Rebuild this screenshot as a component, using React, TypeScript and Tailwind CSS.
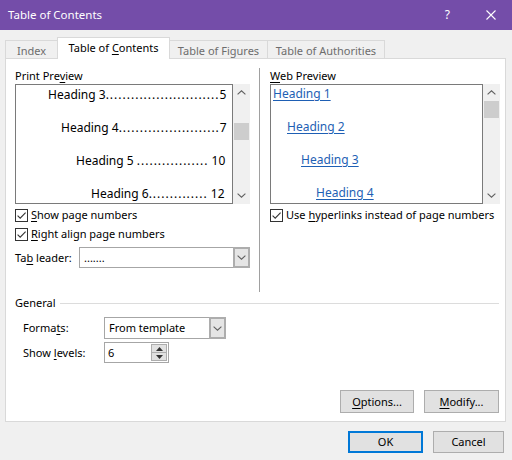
import type { ReactNode } from 'react';

function U({ children }: { children: ReactNode }) {
  return <span className="underline decoration-1 underline-offset-[2px]">{children}</span>;
}

function CheckBox() {
  return (
    <span className="flex h-[13px] w-[13px] shrink-0 items-center justify-center border border-[#333333] bg-white">
      <svg width="11" height="11" viewBox="0 0 11 11">
        <path d="M1.6 5.6 4.2 8.2 9.6 2.6" fill="none" stroke="#333333" strokeWidth="1.1" />
      </svg>
    </span>
  );
}

function Chevron({ up = false }: { up?: boolean }) {
  return (
    <svg width="9" height="5" viewBox="0 0 9 5">
      <path
        d={up ? 'M0.6 4.4 4.5 0.8 8.4 4.4' : 'M0.6 0.6 4.5 4.2 8.4 0.6'}
        fill="none"
        stroke="#606060"
        strokeWidth="1.1"
      />
    </svg>
  );
}

function ScrollBar({ thumbTop }: { thumbTop: number }) {
  return (
    <div className="flex w-[17px] shrink-0 flex-col bg-[#f0f0f0]">
      <div className="flex h-[17px] items-center justify-center">
        <Chevron up />
      </div>
      <div className="relative flex-1">
        <div className="absolute left-[1px] right-[1px] h-[17px] bg-[#cdcdcd]" style={{ top: thumbTop }} />
      </div>
      <div className="flex h-[17px] items-center justify-center">
        <Chevron />
      </div>
    </div>
  );
}

function Combo({ value, width, height }: { value: string; width: string; height: string }) {
  return (
    <div className={`flex ${width} ${height} bg-white`}>
      <div className="flex flex-1 items-center border border-r-0 border-[#a6a6a6] pl-[4px] text-black">
        <span>{value}</span>
      </div>
      <div className="flex w-[17px] items-center justify-center border-2 border-[#adadad] bg-[#e5e5e5]">
        <Chevron />
      </div>
    </div>
  );
}

// dot leaders sized so each row fits the preview box
const printRows = [
  { pad: 'pl-[32px]', label: 'Heading 3', dots: 27, num: '5' },
  { pad: 'pl-[45px]', label: 'Heading 4', dots: 24, num: '7' },
  { pad: 'pl-[60px]', label: 'Heading 5 ', dots: 17, num: ' 10' },
  { pad: 'pl-[75px]', label: 'Heading 6', dots: 14, num: ' 12' },
];

const webRows = [
  { pad: 'pl-[2px]', label: 'Heading 1' },
  { pad: 'pl-[16px]', label: 'Heading 2' },
  { pad: 'pl-[30px]', label: 'Heading 3' },
  { pad: 'pl-[45px]', label: 'Heading 4' },
];

function Button({ children, width, primary = false }: { children: ReactNode; width: string; primary?: boolean }) {
  return (
    <button
      type="button"
      className={`flex h-[22px] ${width} items-center justify-center bg-[#e1e1e1] text-black ${
        primary ? 'border-2 border-[#0078d7]' : 'border border-[#adadad]'
      }`}
    >
      {children}
    </button>
  );
}

export default function App() {
  return (
    <div className="flex h-[460px] w-[512px] flex-col overflow-hidden bg-[#f0f0f0] font-['Noto_Sans','Liberation_Sans',sans-serif] text-[11px] leading-[16px] text-black">
      {/* title bar */}
      <div className="flex h-[30px] shrink-0 items-center bg-[#744da9] pl-[8px] text-[11.5px] text-white">
        <span className="flex-1">Table of Contents</span>
        <span className="mr-[36px] text-[12px]">?</span>
        <svg width="10" height="10" viewBox="0 0 10 10" className="mr-[16px]">
          <path d="M0.5 0.5 9.5 9.5M9.5 0.5 0.5 9.5" stroke="#ffffff" strokeWidth="1.1" />
        </svg>
      </div>

      {/* tabs */}
      <div className="mt-[7px] flex h-[21px] items-end pl-[5px]">
        <div className="flex h-[18px] w-[52px] items-center justify-center border-l border-t border-[#d9d9d9] pt-[2px] text-[#6d6d6d]">
          <span>Index</span>
        </div>
        <div className="relative z-10 -mb-px flex h-[22px] w-[113px] items-center justify-center border-x border-t border-[#d9d9d9] bg-white pb-[1px]">
          <span>
            Table of <U>C</U>ontents
          </span>
        </div>
        <div className="flex h-[18px] w-[98px] items-center justify-center border-r border-t border-[#d9d9d9] pt-[2px] text-[#6d6d6d]">
          <span>Table of Figures</span>
        </div>
        <div className="flex h-[18px] w-[117px] items-center justify-center border-r border-t border-[#d9d9d9] pt-[2px] text-[#6d6d6d]">
          <span>Table of Authorities</span>
        </div>
      </div>

      {/* panel */}
      <div className="ml-[5px] mr-[6px] flex h-[364px] flex-col border border-[#d9d9d9] bg-white pb-[8px] pl-[9px] pt-[9px]">
        <div className="flex h-[224px]">
          {/* left column */}
          <div className="flex w-[235px] flex-col">
            <div className="h-[16px]">
              Print Pre<U>v</U>iew
            </div>
            <div className="flex h-[120px]">
              <div className="flex-1 overflow-hidden border border-[#7a7a7a] pt-[2px] pr-[8px] text-[12px]">
                {printRows.map((r) => (
                  <div key={r.label} className={`flex h-[33px] items-start whitespace-pre ${r.pad}`}>
                    <span className="leading-[16px]">{r.label}</span>
                    <span className="flex-1 text-left leading-[16px] tracking-[1px]">{'.'.repeat(r.dots)}</span>
                    <span className="leading-[16px]">{r.num}</span>
                  </div>
                ))}
              </div>
              <ScrollBar thumbTop={22} />
            </div>
            <div className="mt-[3px] flex h-[16px] items-center gap-[3px]">
              <CheckBox />
              <span>
                <U>S</U>how page numbers
              </span>
            </div>
            <div className="mt-[3px] flex h-[16px] items-center gap-[3px]">
              <CheckBox />
              <span>
                <U>R</U>ight align page numbers
              </span>
            </div>
            <div className="mt-[5px] flex items-center">
              <span className="w-[64px]">
                Ta<U>b</U> leader:
              </span>
              <Combo value="......." width="w-[171px]" height="h-[21px]" />
            </div>
          </div>

          <div className="ml-[9px] w-px bg-[#a0a0a0]" />

          {/* right column */}
          <div className="ml-[10px] flex w-[230px] flex-col">
            <div className="h-[16px]">
              <U>W</U>eb Preview
            </div>
            <div className="flex h-[120px]">
              <div className="flex-1 overflow-hidden border border-[#7a7a7a] pt-[1px] text-[12px]">
                {webRows.map((r) => (
                  <div key={r.label} className={`h-[33px] ${r.pad}`}>
                    <span className="text-[#1e5fb4] underline decoration-1 underline-offset-[2px]">{r.label}</span>
                  </div>
                ))}
              </div>
              <ScrollBar thumbTop={0} />
            </div>
            <div className="mt-[3px] flex h-[16px] items-center gap-[3px]">
              <CheckBox />
              <span>
                Use <U>h</U>yperlinks instead of page numbers
              </span>
            </div>
          </div>
        </div>

        {/* general */}
        <div className="mt-[3px] flex h-[16px] items-center pr-[6px]">
          <span>General</span>
          <div className="ml-[4px] h-px flex-1 bg-[#dcdcdc]" />
        </div>
        <div className="mt-[6px] flex items-center pl-[8px]">
          <span className="w-[81px]">
            Forma<U>t</U>s:
          </span>
          <Combo value="From template" width="w-[122px]" height="h-[22px]" />
        </div>
        <div className="mt-[3px] flex items-center pl-[8px]">
          <span className="w-[81px]">
            Show <U>l</U>evels:
          </span>
          <div className="flex h-[21px] w-[65px] items-center border border-[#a6a6a6] bg-white pl-[3px]">
            <span className="flex-1">6</span>
            <div className="mr-[1px] flex h-[17px] w-[16px] flex-col border border-[#adadad] bg-[#e1e1e1]">
              <div className="flex flex-1 items-center justify-center border-b border-[#adadad]">
                <svg width="7" height="4" viewBox="0 0 7 4">
                  <path d="M0 4 3.5 0 7 4Z" fill="#333333" />
                </svg>
              </div>
              <div className="flex flex-1 items-center justify-center">
                <svg width="7" height="4" viewBox="0 0 7 4">
                  <path d="M0 0 3.5 4 7 0Z" fill="#333333" />
                </svg>
              </div>
            </div>
          </div>
        </div>

        <div className="mt-auto flex justify-end gap-[10px] pr-[6px]">
          <Button width="w-[74px] h-[23px]">
            <span>
              <U>O</U>ptions...
            </span>
          </Button>
          <Button width="w-[75px] h-[23px]">
            <span>
              <U>M</U>odify...
            </span>
          </Button>
        </div>
      </div>

      {/* dialog buttons */}
      <div className="mt-[9px] flex justify-end gap-[10px] pr-[8px]">
        <Button width="w-[75px]" primary>
          <span>OK</span>
        </Button>
        <Button width="w-[71px]">
          <span>Cancel</span>
        </Button>
      </div>
    </div>
  );
}
